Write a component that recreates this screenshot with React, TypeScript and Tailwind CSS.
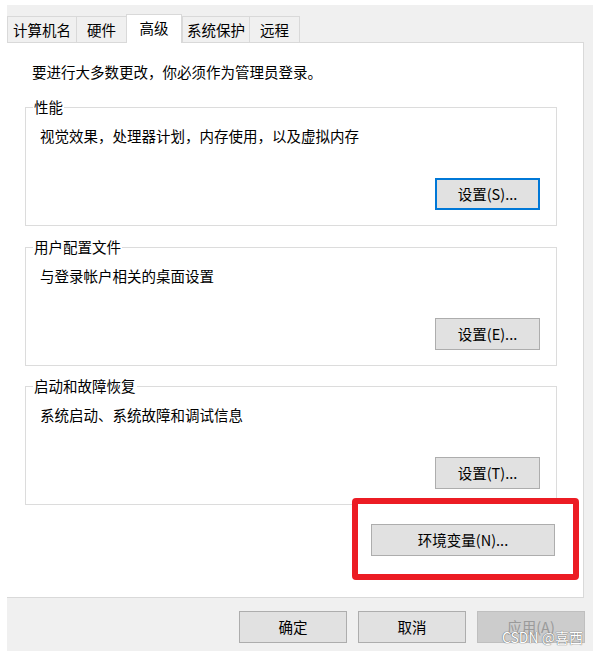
const tabs = [
  { label: '计算机名', width: 'w-[70px]' },
  { label: '硬件', width: 'w-[51px]' },
  { label: '高级', width: 'w-[56px]', active: true },
  { label: '系统保护', width: 'w-[68px]' },
  { label: '远程', width: 'w-[51px]' },
];

const groups = [
  { title: '性能', text: '视觉效果，处理器计划，内存使用，以及虚拟内存', button: '设置(S)...', focused: true, gap: 'mt-[25px]' },
  { title: '用户配置文件', text: '与登录帐户相关的桌面设置', button: '设置(E)...', gap: 'mt-[21px]' },
  { title: '启动和故障恢复', text: '系统启动、系统故障和调试信息', button: '设置(T)...', gap: 'mt-[20px]' },
];

const Button = ({ label, focused, disabled, className = '' }: { label: string; focused?: boolean; disabled?: boolean; className?: string }) => (
  <div
    className={`h-[32px] flex items-center justify-center text-[14.5px] leading-5 ${
      disabled
        ? 'bg-[#cccccc] border border-[#bfbfbf] text-[#9a9a9a]'
        : focused
          ? 'bg-[#e1e1e1] border-2 border-[#0078d7] text-black'
          : 'bg-[#e1e1e1] border border-[#adadad] text-black'
    } ${className}`}
  >
    {label}
  </div>
);

export default function App() {
  return (
    <div className="w-[593px] h-[651px] bg-white pl-[7px] pt-[5px] font-['Noto_Sans_CJK_SC',sans-serif] text-black overflow-hidden">
      <div className="h-full bg-[#f0f0f0] flex flex-col">
        {/* Tabs */}
        <div className="h-[37px] flex items-end shrink-0">
          {tabs.map((t) =>
            t.active ? (
              <div
                key={t.label}
                className={`${t.width} h-[29px] -mb-px relative z-10 bg-white border-t border-l border-r border-[#d9d9d9] flex items-start justify-center pt-[3px] text-[14.5px] leading-5`}
              >
                {t.label}
              </div>
            ) : (
              <div
                key={t.label}
                className={`${t.width} h-[26px] bg-[#f0f0f0] border-t border-l border-r border-[#d9d9d9] -mr-px flex items-center justify-center text-[14.5px] leading-5`}
              >
                {t.label}
              </div>
            )
          )}
        </div>

        {/* Panel */}
        <div className="h-[556px] mr-[9px] shrink-0 bg-white border-t border-r border-b border-[#d9d9d9] pl-[18px] pr-[26px] pt-[19px] flex flex-col">
          <p className="pl-[7px] text-[14.5px] leading-5">要进行大多数更改，你必须作为管理员登录。</p>

          {groups.map((g) => (
            <div key={g.title} className={`${g.gap} relative h-[119px] border border-[#dcdcdc] pt-[18px] pl-[14px] pr-[16px] flex flex-col`}>
              <span className="absolute top-[-11px] left-[7px] bg-white px-px text-[14.5px] leading-5">{g.title}</span>
              <p className="text-[14.5px] leading-5">{g.text}</p>
              <Button label={g.button} focused={g.focused} className="self-end mt-[32px] w-[105px]" />
            </div>
          ))}

          <div className="relative self-end -mr-[22px] -mt-[7px] w-[227px] h-[82px] border-[6px] border-[#ec1c24] rounded-[4px] bg-white pt-[20px] pl-[13px]">
            <Button label="环境变量(N)..." className="w-[184px]" />
          </div>
        </div>

        {/* Footer */}
        <div className="relative flex-1 flex justify-end gap-[11px] pt-[13px] pr-[8px]">
          <Button label="确定" className="w-[108px]" />
          <Button label="取消" className="w-[108px]" />
          <Button label="应用(A)" disabled className="w-[108px]" />
          <span className="absolute right-[10px] bottom-[6px] text-[14px] leading-4 text-white [text-shadow:0_0_1px_#666,0_0_1px_#666]">
            CSDN @喜西
          </span>
        </div>
      </div>
    </div>
  );
}
